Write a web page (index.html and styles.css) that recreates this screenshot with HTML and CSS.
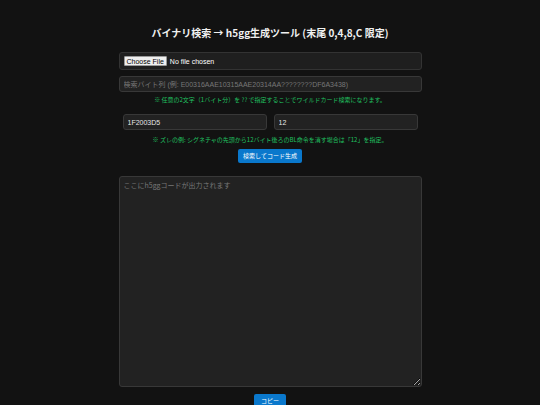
FILE: index.html
```html
<!DOCTYPE html>
<html lang="ja">
<head>
<meta charset="utf-8">
<title>h5gg</title>
<link rel="stylesheet" href="styles.css">
</head>
<body>
<div class="wrap">
  <h1 class="title">バイナリ検索 → h5gg生成ツール (末尾 0,4,8,C 限定)</h1>
  <div class="filebox"><input type="file" class="file"></div>
  <input type="text" class="field" placeholder="検索バイト列 (例: E00316AAE10315AAE20314AA????????DF6A3438)">
  <p class="hint">※ 任意の2文字（1バイト分）を ?? で指定することでワイルドカード検索になります。</p>
  <div class="row">
    <input type="text" class="field half" value="1F2003D5">
    <input type="text" class="field half" value="12">
  </div>
  <p class="hint">※ ズレの例: シグネチャの先頭から12バイト後ろのBL命令を消す場合は「12」を指定。</p>
  <div class="center"><button class="btn">検索してコード生成</button></div>
  <textarea class="out" placeholder="ここにh5ggコードが出力されます"></textarea>
  <div class="center"><button class="btn copy">コピー</button></div>
</div>
</body>
</html>
```
FILE: styles.css
```css
html, body {
  margin: 0;
  padding: 0;
  background: #121212;
  color: #e6e6e6;
  font-family: "Liberation Sans", "Noto Sans CJK JP", sans-serif;
}
.wrap {
  width: 303px;
  margin: 0 auto;
  padding-top: 26px;
  display: flex;
  flex-direction: column;
}
.title {
  font-family: "Noto Sans CJK JP", sans-serif;
  font-size: 10px;
  font-weight: bold;
  text-align: center;
  margin: 0 0 12px;
  line-height: 14px;
  color: #f0f0f0;
}
.filebox {
  box-sizing: border-box;
  height: 18px;
  background: #1f1f1f;
  border: 1px solid #333;
  border-radius: 3px;
  padding: 2px 4px;
  display: flex;
  align-items: center;
}
.file {
  font-family: "Liberation Sans", sans-serif;
  font-size: 7px;
  color: #fff;
}
.file::file-selector-button {
  font-family: "Liberation Sans", sans-serif;
  font-size: 7px;
  padding: 0 2px;
  margin-right: 3px;
  background: #efefef;
  border: 1px solid #999;
  border-radius: 1px;
  color: #000;
  height: 10px;
}
.field {
  box-sizing: border-box;
  height: 16px;
  margin-top: 6px;
  background: #222;
  border: 1px solid #383838;
  border-radius: 3px;
  color: #e6e6e6;
  font-family: "Liberation Sans", "Noto Sans CJK JP", sans-serif;
  font-size: 7px;
  padding: 0 4px;
  outline: none;
}
.field::placeholder {
  color: #777;
}
.hint {
  margin: 3px 0 0;
  font-family: "Noto Sans CJK JP", sans-serif;
  font-size: 6px;
  line-height: 9px;
  text-align: center;
  color: #20c060;
}
.row {
  display: flex;
  gap: 7px;
  padding: 0 4px;
  margin-top: 4px;
}
.row .field {
  flex: 1;
  min-width: 0;
  margin-top: 6px;
}
.row + .hint {
  margin-top: 5px;
}
.center {
  display: flex;
  justify-content: center;
}
.btn {
  margin-top: 5px;
  height: 14px;
  padding: 0 5px;
  background: #0a78cc;
  color: #fff;
  border: none;
  border-radius: 2px;
  font-family: "Noto Sans CJK JP", sans-serif;
  font-size: 6px;
  line-height: 14px;
}
.out {
  box-sizing: border-box;
  height: 211px;
  margin-top: 13px;
  background: #222;
  border: 1px solid #383838;
  border-radius: 3px;
  color: #e6e6e6;
  font-family: "Noto Sans CJK JP", sans-serif;
  font-size: 7px;
  padding: 3px 4px;
  resize: vertical;
  outline: none;
}
.out::placeholder {
  color: #777;
}
.copy {
  margin-top: 7px;
  padding: 0 7px;
}
```
